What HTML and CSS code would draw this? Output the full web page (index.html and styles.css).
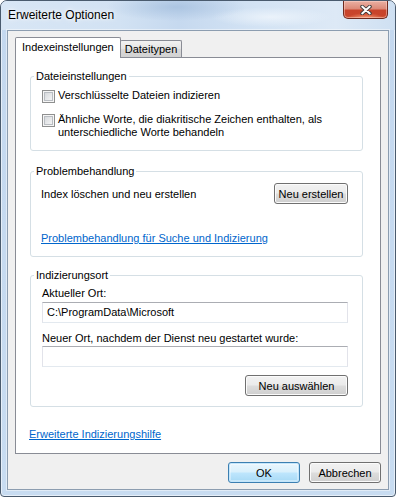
FILE: index.html
```html
<!DOCTYPE html>
<html lang="de">
<head>
<meta charset="utf-8">
<title>Erweiterte Optionen</title>
<link rel="stylesheet" href="styles.css">
</head>
<body>
<div class="window">
  <div class="titlebar">
    <span class="title">Erweiterte Optionen</span>
    <div class="close">
      <svg width="12" height="10" viewBox="0 0 12 10">
        <path d="M2.2 1.6 L9.8 8.4 M9.8 1.6 L2.2 8.4" stroke="#3a3a3a" stroke-width="3.8" stroke-linecap="round" fill="none"/>
        <path d="M2.2 1.6 L9.8 8.4 M9.8 1.6 L2.2 8.4" stroke="#ffffff" stroke-width="2" stroke-linecap="round" fill="none"/>
      </svg>
    </div>
  </div>
  <div class="client">
    <div class="tabs">
      <div class="tab active">Indexeinstellungen</div>
      <div class="tab">Dateitypen</div>
    </div>
    <div class="panel">
      <fieldset class="group g1">
        <legend>Dateieinstellungen</legend>
        <label class="check"><span class="cb"></span><span>Verschlüsselte Dateien indizieren</span></label>
        <label class="check second"><span class="cb"></span><span>Ähnliche Worte, die diakritische Zeichen enthalten, als<br>unterschiedliche Worte behandeln</span></label>
      </fieldset>
      <fieldset class="group g2">
        <legend>Problembehandlung</legend>
        <div class="row">
          <span>Index löschen und neu erstellen</span>
          <button class="btn w73">Neu erstellen</button>
        </div>
        <a class="link trouble" href="#">Problembehandlung für Suche und Indizierung</a>
      </fieldset>
      <fieldset class="group g3">
        <legend>Indizierungsort</legend>
        <div class="label">Aktueller Ort:</div>
        <div class="textbox first">C:\ProgramData\Microsoft</div>
        <div class="label second">Neuer Ort, nachdem der Dienst neu gestartet wurde:</div>
        <div class="textbox"></div>
        <div class="btnrow"><button class="btn w102">Neu auswählen</button></div>
      </fieldset>
      <a class="link help" href="#">Erweiterte Indizierungshilfe</a>
    </div>
    <div class="footer">
      <button class="btn default">OK</button>
      <button class="btn">Abbrechen</button>
    </div>
  </div>
</div>
</body>
</html>
```
FILE: styles.css
```css
body {
  margin: 0;
  background: #ffffff;
  font-family: "Liberation Sans", Arial, sans-serif;
  font-size: 11px;
  color: #000;
}

.window {
  box-sizing: border-box;
  width: 396px;
  height: 497px;
  border: 1px solid #4a5b6e;
  border-radius: 7px 7px 4px 4px;
  background: linear-gradient(to bottom, #c4d8ef, #c8dcf1);
  box-shadow: inset 0 0 0 1px rgba(255, 255, 255, 0.55);
  padding: 0 6px 6px;
  display: flex;
  flex-direction: column;
}

.titlebar {
  height: 29px;
  margin: 0 -6px;
  padding: 0 7px;
  border-radius: 6px 6px 0 0;
  display: flex;
  justify-content: space-between;
  align-items: flex-start;
  background:
    radial-gradient(ellipse 70px 14px at 175px 6px, rgba(150, 180, 215, 0.55), rgba(150, 180, 215, 0)),
    radial-gradient(ellipse 60px 10px at 270px 16px, rgba(240, 246, 252, 0.8), rgba(240, 246, 252, 0)),
    linear-gradient(90deg, #d8e6f5 0%, #d2e2f3 30%, #c6d9ef 45%, #d3e3f4 65%, #dde9f6 85%, #cfe0f2 100%);
}

.title {
  line-height: 29px;
  font-size: 12px;
  color: #000;
  text-shadow: 0 0 6px rgba(255, 255, 255, 0.95), 0 0 3px #fff;
}

.close {
  width: 45px;
  height: 18px;
  box-sizing: border-box;
  border: 1px solid #6e2a1f;
  border-top: none;
  border-radius: 0 0 5px 5px;
  background:
    radial-gradient(ellipse 18px 5px at 50% 100%, rgba(255, 170, 130, 0.8), rgba(255, 170, 130, 0)),
    linear-gradient(to bottom, #eab0a3 0%, #dc8a79 45%, #c8442b 55%, #c9452b 85%, #d45a3a 100%);
  box-shadow: inset 0 0 0 1px rgba(255, 220, 210, 0.45);
  display: flex;
  align-items: center;
  justify-content: center;
}

.client {
  flex: 1;
  border: 1px solid #8c9db0;
  background: #f0f0f0;
  box-shadow: 0 0 0 1px rgba(255, 255, 255, 0.45);
  padding: 6px 7px 0;
  display: flex;
  flex-direction: column;
}

.tabs {
  height: 20px;
  display: flex;
  align-items: flex-end;
}

.tab {
  box-sizing: border-box;
  height: 17px;
  line-height: 17px;
  padding: 0 4px 0 4px;
  margin-left: -1px;
  border: 1px solid #898c95;
  border-bottom: none;
  border-radius: 2px 2px 0 0;
  background: linear-gradient(to bottom, #f2f2f2, #e3e3e3 50%, #d9d9d9 51%, #d2d2d2);
}

.tab.active {
  position: relative;
  z-index: 1;
  height: 21px;
  line-height: 19px;
  margin-left: 0;
  margin-bottom: -1px;
  padding: 0 6px;
  background: #ffffff;
}

.panel {
  border: 1px solid #898c95;
  background: #ffffff;
  padding: 11px 0 12px 14px;
  display: flex;
  flex-direction: column;
  align-items: flex-start;
}

.group {
  box-sizing: border-box;
  width: 333px;
  min-inline-size: 0;
  margin: 0;
  padding: 0 14px 0 10px;
  border: 1px solid #d5dfe5;
  border-radius: 3px;
}

.group legend {
  padding: 0 2px;
  margin-left: -7px;
  line-height: 14px;
}

.g1 {
  padding-top: 6px;
  padding-bottom: 11px;
}

.g2 {
  margin-top: 13px;
  padding-top: 5px;
  padding-bottom: 11px;
}

.g3 {
  margin-top: 11px;
  padding-top: 4px;
  padding-bottom: 10px;
}

.check {
  display: flex;
  align-items: flex-start;
  line-height: 13px;
  margin-left: 1px;
}

.check.second {
  margin-top: 10px;
}

.cb {
  flex: none;
  box-sizing: border-box;
  width: 13px;
  height: 13px;
  margin-top: 1px;
  margin-right: 3px;
  border: 1px solid #8e8f8f;
  background: linear-gradient(135deg, #cfd2d6, #eeeff0 70%, #f7f7f7);
  box-shadow: inset 0 0 0 1px #f5f5f5, inset 0 0 0 2px #b9bdc2;
}

.row {
  display: flex;
  justify-content: space-between;
  align-items: center;
  line-height: 14px;
}

.link {
  display: block;
  line-height: 14px;
  color: #0066cc;
  text-decoration: underline;
}

.link.trouble {
  margin-top: 27px;
}

.link.help {
  margin-top: 20px;
  margin-left: -1px;
}

.label {
  line-height: 14px;
  margin-left: 1px;
}

.label.second {
  margin-top: 8px;
}

.textbox {
  box-sizing: border-box;
  height: 21px;
  margin-left: 1px;
  margin-top: 1px;
  padding: 0 4px;
  line-height: 19px;
  background: #ffffff;
  border: 1px solid #dbdfe6;
  border-top-color: #abadb3;
  border-left-color: #e2e3ea;
  border-right-color: #e2e3ea;
  border-bottom-color: #e3e9ef;
}

.textbox.first {
  margin-top: 2px;
}

.btnrow {
  display: flex;
  justify-content: flex-end;
  margin-top: 8px;
}

.btn {
  box-sizing: border-box;
  width: 72px;
  height: 21px;
  padding: 0;
  font-family: "Liberation Sans", Arial, sans-serif;
  font-size: 11px;
  color: #000;
  border: 1px solid #707070;
  border-radius: 3px;
  background: linear-gradient(to bottom, #f2f2f2 0%, #ebebeb 48%, #dddddd 52%, #cfcfcf 100%);
  box-shadow: inset 0 0 0 1px #fbfbfb;
}

.btn.w73 {
  width: 74px;
}

.btn.w102 {
  width: 103px;
}

.btn.default {
  border-color: #3c7fb1;
  background: linear-gradient(to bottom, #eaf6fd 0%, #d9f0fc 48%, #bee6fd 52%, #a7d9f5 100%);
  box-shadow: inset 0 0 0 1px #c4e6fb, inset 0 0 0 2px rgba(255, 255, 255, 0.35);
}

.footer {
  margin-top: 8px;
  display: flex;
  justify-content: flex-end;
  gap: 9px;
}
```
